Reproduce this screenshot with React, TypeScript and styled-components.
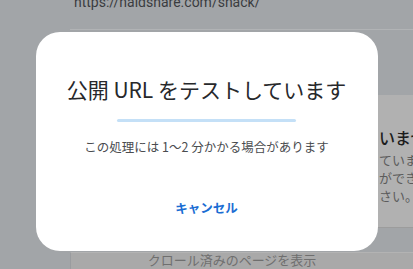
import React from 'react';
import styled, { createGlobalStyle } from 'styled-components';

const GlobalStyle = createGlobalStyle`
    html, body {
        margin: 0;
        padding: 0;
        width: 413px;
        height: 269px;
        overflow: hidden;
        background: #a2a5a8;
        font-family: "Noto Sans CJK JP", "Noto Sans", Roboto, sans-serif;
    }
    * {
        box-sizing: border-box;
    }
`;

const Page = styled.div`
    display: flex;
    width: 413px;
    height: 269px;
    overflow: hidden;
`;

const Sidebar = styled.div`
    width: 70px;
    flex-shrink: 0;
    background: #a2a5a8;
`;

const Main = styled.div`
    flex: 1;
    display: flex;
    flex-direction: column;
    min-width: 0;
`;

const UrlBar = styled.div`
    height: 30px;
    flex-shrink: 0;
    padding-left: 4px;
    border-bottom: 1px solid #b1b3b5;
    overflow: hidden;
    background: #a2a5a8;
`;

const UrlText = styled.div`
    margin-top: -7px;
    font-family: Roboto, "Noto Sans", sans-serif;
    font-size: 14px;
    line-height: 18px;
    color: #3a3c3f;
`;

const Content = styled.div`
    flex: 1;
    display: flex;
    flex-direction: column;
    min-height: 0;
    background: #a2a5a8;
`;

const CardRow = styled.div`
    display: flex;
    justify-content: flex-end;
    flex-shrink: 0;
    padding-top: 65px;
    height: 198px;
    border-bottom: 1px solid #9c9c9c;
`;

const StatusCard = styled.div`
    width: 113px;
    padding: 31px 0 0 79px;
    background: #b1b1b1;
    overflow: hidden;
    white-space: nowrap;
`;

const CardHeading = styled.div`
    margin-bottom: 3px;
    font-size: 16px;
    line-height: 22px;
    font-weight: 500;
    color: #1c1c1c;
`;

const CardLine = styled.div`
    font-size: 13px;
    line-height: 18px;
    color: #5c5c5c;
`;

const BottomBar = styled.div`
    margin-top: 24px;
    flex: 1;
    border-top: 1px solid #b3b3b3;
    border-left: 1px solid #9a9c9f;
    background: #a9a9a9;
    display: flex;
    justify-content: center;
`;

const BottomLabel = styled.div`
    margin-left: -20px;
    font-size: 13px;
    line-height: 14px;
    color: #6f6f6f;
    white-space: nowrap;
`;

const Scrim = styled.div`
    position: fixed;
    inset: 0;
    display: flex;
    justify-content: center;
    align-items: flex-start;
    padding-top: 32px;
`;

const Dialog = styled.div`
    width: 342px;
    height: 219px;
    padding: 44px 24px 0;
    background: #ffffff;
    border-radius: 24px;
    display: flex;
    flex-direction: column;
    align-items: center;
`;

const Title = styled.div`
    font-size: 21px;
    line-height: 26px;
    color: #27282b;
    white-space: nowrap;
`;

const Progress = styled.div`
    margin-top: 17px;
    width: 179px;
    height: 3px;
    border-radius: 2px;
    background: #c4e0f7;
`;

const Message = styled.div`
    margin-top: 16px;
    font-size: 12.5px;
    line-height: 18px;
    color: #4a4c4f;
    white-space: nowrap;
`;

const CancelButton = styled.button`
    margin-top: 43px;
    border: none;
    background: none;
    padding: 0;
    font-family: inherit;
    font-size: 12.5px;
    line-height: 18px;
    font-weight: 700;
    color: #1a6dd3;
    cursor: pointer;
`;

export default function App() {
    return (
        <>
            <GlobalStyle />
            <Page>
                <Sidebar />
                <Main>
                    <UrlBar>
                        <UrlText>https://naidshare.com/snack/</UrlText>
                    </UrlBar>
                    <Content>
                        <CardRow>
                            <StatusCard>
                                <CardHeading>いません</CardHeading>
                                <CardLine>ていません</CardLine>
                                <CardLine>ができません</CardLine>
                                <CardLine>さい。</CardLine>
                            </StatusCard>
                        </CardRow>
                        <BottomBar>
                            <BottomLabel>クロール済みのページを表示</BottomLabel>
                        </BottomBar>
                    </Content>
                </Main>
            </Page>
            <Scrim>
                <Dialog role="dialog">
                    <Title>公開 URL をテストしています</Title>
                    <Progress />
                    <Message>この処理には 1〜2 分かかる場合があります</Message>
                    <CancelButton>キャンセル</CancelButton>
                </Dialog>
            </Scrim>
        </>
    );
}
